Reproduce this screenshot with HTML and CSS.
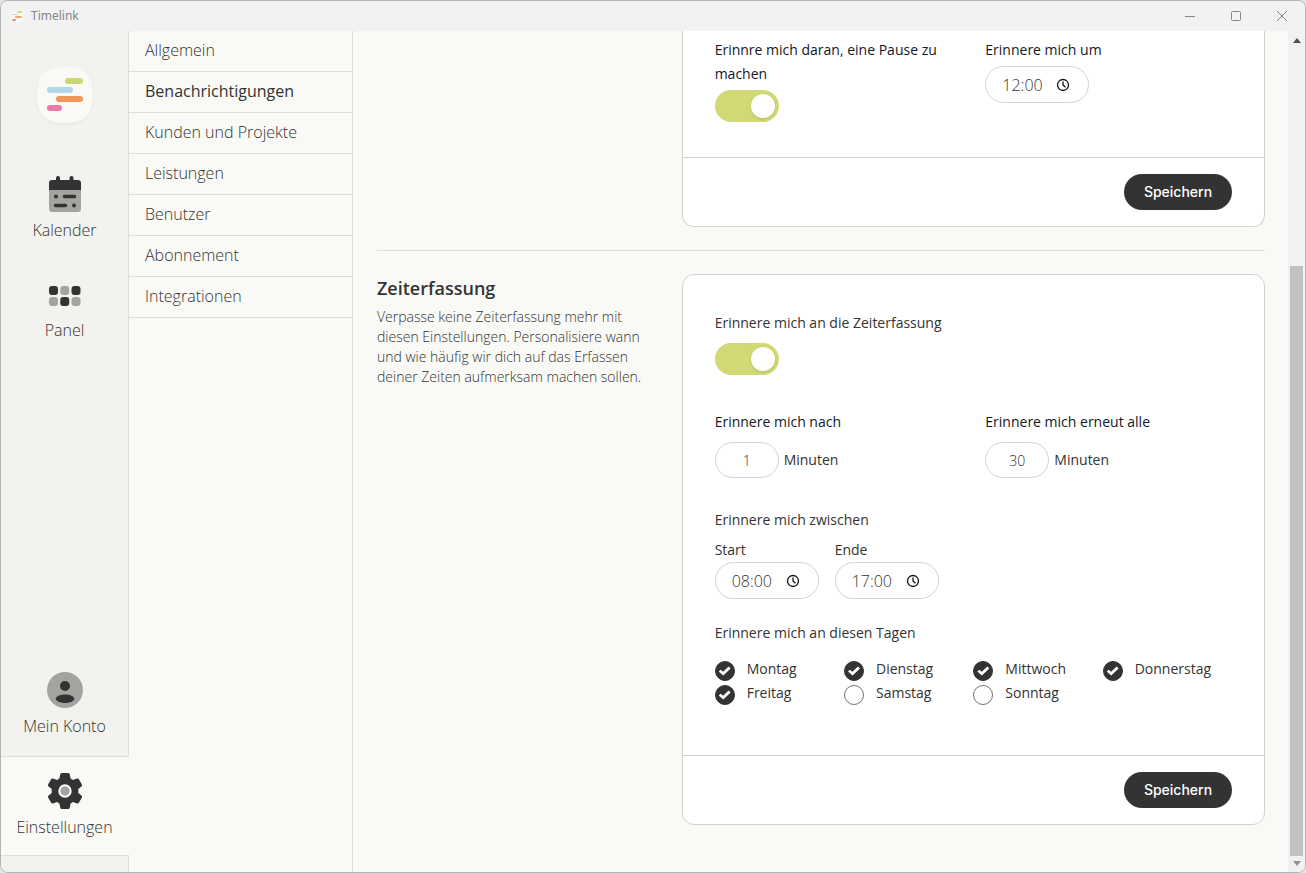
FILE: index.html
```html
<!DOCTYPE html>
<html lang="de">
<head>
<meta charset="utf-8">
<meta name="viewport" content="width=device-width, initial-scale=1">
<title>Timelink</title>
<link rel="stylesheet" href="styles.css">
</head>
<body>
<div class="window">
  <header class="titlebar">
    <svg class="titlebar-logo" viewBox="0 0 12 12" aria-hidden="true"><rect width="12" height="12" rx="4" fill="#faf7f1"/><rect x="6" y="1" width="5" height="2" rx="1" fill="#ccd673"/><rect x="1" y="4" width="6" height="1" fill="#c5d3d6"/><rect x="4" y="6" width="7" height="2" rx="1" fill="#f2a57a"/><rect x="1" y="9" width="4" height="2" rx="1" fill="#ef8f8c"/></svg>
    <span class="titlebar-name">Timelink</span>
    <div class="window-controls">
      <button class="window-button" aria-label="Minimieren"><svg viewBox="0 0 12 12"><path d="M1 6.500h10"/></svg></button>
      <button class="window-button" aria-label="Maximieren"><svg viewBox="0 0 12 12"><rect x="1.500" y="1.500" width="9" height="9" rx="1"/></svg></button>
      <button class="window-button" aria-label="Schließen"><svg viewBox="0 0 12 12"><path d="M1 1l10 10M11 1L1 11"/></svg></button>
    </div>
  </header>
  <div class="app">
    <nav class="sidebar" aria-label="Hauptnavigation">
      <svg class="logo" viewBox="0 0 56 56" aria-hidden="true"><path d="M28 0C48 0 56 8 56 28S48 56 28 56 0 48 0 28 8 0 28 0Z" fill="#faf9f6"/><rect x="28" y="11" width="18" height="6" rx="3" fill="#ccd673"/><rect x="10" y="20" width="26" height="6" rx="3" fill="#b0d6e7"/><rect x="19" y="29" width="27" height="6" rx="3" fill="#f2965c"/><rect x="10" y="38" width="15" height="6" rx="3" fill="#e879a8"/></svg>
      <a class="side-link" href="#kalender">
        <svg class="side-icon" viewBox="0 0 36 36" aria-hidden="true"><path d="M2 13h32v20a3 3 0 0 1-3 3H5a3 3 0 0 1-3-3Z" fill="#a3a49f"/><path d="M2 14V7a3 3 0 0 1 3-3h4V2a2 2 0 0 1 4 0v2h9.500V2a2 2 0 0 1 4 0v2H31a3 3 0 0 1 3 3v7Z" fill="#333"/><circle cx="9" cy="20.500" r="2" fill="#333"/><path d="M17.500 20.500h10M8.500 29.500h10" stroke="#333" stroke-width="3.500" stroke-linecap="round"/><circle cx="27" cy="29.500" r="2" fill="#333"/></svg>
        <span>Kalender</span>
      </a>
      <a class="side-link" href="#panel">
        <svg class="side-icon" viewBox="0 0 36 36" aria-hidden="true"><g fill="#333"><rect x="2" y="10" width="9" height="9" rx="3"/><rect x="24.500" y="10" width="9" height="9" rx="3"/><rect x="13.250" y="21" width="9" height="9" rx="3"/></g><g fill="#a3a49f"><rect x="13.250" y="10" width="9" height="9" rx="3"/><rect x="2" y="21" width="9" height="9" rx="3"/><rect x="24.500" y="21" width="9" height="9" rx="3"/></g></svg>
        <span>Panel</span>
      </a>
      <div class="side-spacer"></div>
      <a class="side-link" href="#konto">
        <svg class="side-icon" viewBox="0 0 36 36" aria-hidden="true"><circle cx="18" cy="18" r="18" fill="#a3a49f"/><circle cx="18" cy="14" r="5" fill="#333"/><path d="M8.500 26.500C11 21 25 21 27.500 26.500 26 32.500 10 32.500 8.500 26.500Z" fill="#333"/></svg>
        <span>Mein Konto</span>
      </a>
      <a class="side-link active" href="#einstellungen" aria-current="page">
        <svg class="side-icon" viewBox="0 0 36 36" aria-hidden="true"><path d="M15 0h6q1.500 0 1.800 1.500l.8 4 2.400 1.400 3.900-1.300q1.400-.5 2.100.8l2.800 4.800q.7 1.300-.4 2.200L31.300 16v3.900l3.100 2.700q1.100.9.400 2.200L32 29.600q-.7 1.300-2.100.8L26 29.100l-2.400 1.400-.8 4Q22.500 36 21 36h-6q-1.500 0-1.800-1.500l-.8-4L10 29.100l-3.900 1.300q-1.400.5-2.100-.8l-2.800-4.800q-.7-1.300.4-2.200L4.700 19.900V16l-3.100-2.600q-1.100-.9-.4-2.200L4 6.400q.7-1.300 2.100-.8L10 6.900l2.400-1.400.8-4Q13.500 0 15 0Z" fill="#333"/><circle cx="18" cy="18" r="5.700" fill="#a3a49f" stroke="#fff" stroke-width="2"/></svg>
        <span>Einstellungen</span>
      </a>
    </nav>
    <nav class="subnav" aria-label="Einstellungen">
      <a href="#allgemein">Allgemein</a>
      <a class="current" href="#benachrichtigungen" aria-current="page">Benachrichtigungen</a>
      <a href="#kunden">Kunden und Projekte</a>
      <a href="#leistungen">Leistungen</a>
      <a href="#benutzer">Benutzer</a>
      <a href="#abonnement">Abonnement</a>
      <a href="#integrationen">Integrationen</a>
    </nav>
    <main class="content">
      <section class="setting">
        <div class="intro"></div>
        <form class="card card-continued">
          <div class="card-body pause-body">
            <div class="columns">
              <div>
                <label class="strong" for="pause">Erinnre mich daran, eine Pause zu machen</label>
                <input class="toggle" id="pause" type="checkbox" role="switch" checked>
              </div>
              <div>
                <label class="strong" for="pause-time">Erinnere mich um</label>
                <div class="time pause-time"><input id="pause-time" type="text" value="12:00"><svg viewBox="0 0 14 14" aria-hidden="true"><circle cx="7" cy="7" r="5.500"/><path d="M7 3.500V7l2.500 2.200"/></svg></div>
              </div>
            </div>
          </div>
          <div class="card-footer"><button class="save" type="button">Speichern</button></div>
        </form>
      </section>
      <hr class="divider">
      <section class="setting">
        <div class="intro">
          <h2>Zeiterfassung</h2>
          <p>Verpasse keine Zeiterfassung mehr mit diesen Einstellungen. Personalisiere wann und wie häufig wir dich auf das Erfassen deiner Zeiten aufmerksam machen sollen.</p>
        </div>
        <form class="card">
          <div class="card-body">
            <label for="tracking">Erinnere mich an die Zeiterfassung</label>
            <input class="toggle spaced" id="tracking" type="checkbox" role="switch" checked>
            <div class="columns intervals">
              <div>
                <label class="strong" for="after">Erinnere mich nach</label>
                <div class="minutes"><input id="after" type="text" inputmode="numeric" value="1"><span>Minuten</span></div>
              </div>
              <div>
                <label class="strong" for="again">Erinnere mich erneut alle</label>
                <div class="minutes"><input id="again" type="text" inputmode="numeric" value="30"><span>Minuten</span></div>
              </div>
            </div>
            <fieldset class="between">
              <legend>Erinnere mich zwischen</legend>
              <div class="times">
                <div>
                  <label for="start">Start</label>
                  <div class="time"><input id="start" type="text" value="08:00"><svg viewBox="0 0 14 14" aria-hidden="true"><circle cx="7" cy="7" r="5.500"/><path d="M7 3.500V7l2.500 2.200"/></svg></div>
                </div>
                <div>
                  <label for="end">Ende</label>
                  <div class="time"><input id="end" type="text" value="17:00"><svg viewBox="0 0 14 14" aria-hidden="true"><circle cx="7" cy="7" r="5.500"/><path d="M7 3.500V7l2.500 2.200"/></svg></div>
                </div>
              </div>
            </fieldset>
            <fieldset class="weekdays">
              <legend>Erinnere mich an diesen Tagen</legend>
              <div class="days">
                <label class="day"><input type="checkbox" checked>Montag</label>
                <label class="day"><input type="checkbox" checked>Dienstag</label>
                <label class="day"><input type="checkbox" checked>Mittwoch</label>
                <label class="day"><input type="checkbox" checked>Donnerstag</label>
                <label class="day"><input type="checkbox" checked>Freitag</label>
                <label class="day"><input type="checkbox">Samstag</label>
                <label class="day"><input type="checkbox">Sonntag</label>
              </div>
            </fieldset>
          </div>
          <div class="card-footer"><button class="save" type="button">Speichern</button></div>
        </form>
      </section>
    </main>
    <div class="scrollbar" aria-hidden="true">
      <svg viewBox="0 0 8 5"><path d="M0 5l4-5 4 5Z" fill="#505050"/></svg>
      <div class="track"><div class="thumb"></div></div>
      <svg viewBox="0 0 8 5"><path d="M0 0h8L4 5Z" fill="#909090"/></svg>
    </div>
  </div>
</div>
</body>
</html>
```
FILE: styles.css
```css
* { box-sizing: border-box; }

body {
  margin: 0;
  background: #e4e4e4;
  color: #333;
  font: 300 16px/24px "Open Sans", "Noto Sans", sans-serif;
}

a { color: inherit; text-decoration: none; }

input, button { font: inherit; color: inherit; }

.window {
  display: flex;
  flex-direction: column;
  height: 100vh;
  overflow: hidden;
  border: 1px solid #b4b4b4;
  border-radius: 8px;
  background: #f9faf6;
}

.titlebar {
  display: flex;
  flex: none;
  align-items: center;
  height: 30px;
  padding-left: 10px;
  background: #f2f2f2;
}

.titlebar-logo { width: 12px; height: 12px; }

.titlebar-name {
  margin-left: 8px;
  color: #858585;
  font: 400 12px/16px "Noto Sans", "Open Sans", sans-serif;
}

.window-controls { display: flex; margin-left: auto; }

.window-button {
  display: grid;
  place-items: center;
  width: 46px;
  height: 30px;
  padding: 0;
  border: 0;
  background: none;
}

.window-button svg {
  width: 12px;
  height: 12px;
  fill: none;
  stroke: #858585;
}

.app { display: flex; flex: 1; min-height: 0; }

.sidebar {
  display: flex;
  flex: none;
  flex-direction: column;
  align-items: center;
  width: 128px;
  padding: 36px 0 16px;
  border-right: 1px solid #dedfdb;
  background: #f2f3ee;
}

.logo {
  flex: none;
  width: 56px;
  height: 56px;
  margin-bottom: 36px;
  filter: drop-shadow(0 1px 1px #00000012);
}

.side-link {
  display: flex;
  flex: none;
  flex-direction: column;
  align-items: center;
  gap: 6px;
  width: 100%;
  padding: 16px 0 18px;
}

.sidebar > .side-link:first-of-type { padding-top: 17px; }

.side-link.active {
  width: calc(100% + 1px);
  margin-right: -1px;
  padding: 16px 1px 16px 0;
  border: solid #dedfdb;
  border-width: 1px 0;
  background: #f9faf6;
}

.side-icon { width: 36px; height: 36px; }

.side-spacer { flex: 1; }

.subnav {
  flex: none;
  width: 224px;
  border-right: 1px solid #dedfdb;
}

.subnav a {
  display: block;
  padding: 7px 16px 9px;
  border-bottom: 1px solid #dedfdb;
}

.subnav .current { font-weight: 400; }

.content {
  flex: 1;
  min-width: 0;
  overflow: hidden;
  padding: 0 23px 0 24px;
}

.setting {
  display: grid;
  grid-template-columns: repeat(3, minmax(0, 1fr));
  gap: 26px;
}

.intro h2 {
  margin: 1px 0 6px;
  font-size: 18px;
  font-weight: 600;
  line-height: 26px;
}

.intro p {
  margin: 0;
  font-size: 14px;
  line-height: 20px;
}

.divider {
  height: 1px;
  margin: 23px 0;
  border: 0;
  background: #dedfdb;
}

.card {
  grid-column: span 2;
  border: 1px solid #d2d2d2;
  border-radius: 12px;
  background: #fff;
  font-size: 14px;
  font-weight: 400;
}

.card-continued { border-top: 0; border-radius: 0 0 12px 12px; }

.card-body { padding: 36px 32px 50px; }

.pause-body { padding: 7px 32px 35px; }

.columns {
  display: grid;
  grid-template-columns: 1fr 1fr;
  gap: 24px;
}

label, legend { display: block; padding: 0; }

.strong { color: #111827; }

.toggle {
  display: block;
  appearance: none;
  width: 64px;
  height: 32px;
  margin: 4px 0 0;
  padding: 4px;
  border-radius: 16px;
  background: #d1d874;
}

.toggle::before {
  content: "";
  display: block;
  width: 24px;
  height: 24px;
  margin-left: auto;
  border-radius: 50%;
  background: #fff;
  box-shadow: 0 1px 3px #00000020;
}

.toggle.spaced { margin-top: 8px; }

.intervals { margin-top: 35px; }

.minutes {
  display: flex;
  align-items: center;
  gap: 5px;
  margin-top: 8px;
}

.minutes input {
  width: 64px;
  height: 36px;
  border: 1px solid #d2d2d2;
  border-radius: 18px;
  background: #fff;
  font-weight: 300;
  text-align: center;
}

fieldset { margin: 0; padding: 0; border: 0; }

.between { margin-top: 30px; }

.times { display: flex; gap: 16px; margin-top: 6px; }

.time {
  display: flex;
  align-items: center;
  justify-content: space-between;
  width: 104px;
  height: 37px;
  padding: 0 18px 0 16px;
  border: 1px solid #d2d2d2;
  border-radius: 19px;
}

.pause-time { margin-top: 4px; }

.time input {
  width: 48px;
  padding: 0;
  border: 0;
  background: none;
  font-size: 16px;
  font-weight: 300;
}

.time svg {
  width: 14px;
  height: 14px;
  fill: none;
  stroke: #111;
  stroke-width: 1.3;
}

.weekdays { margin-top: 22px; }

.days {
  display: grid;
  grid-template-columns: repeat(4, 1fr);
  margin-top: 12px;
}

.day { display: flex; gap: 12px; }

.day input {
  flex: none;
  appearance: none;
  width: 20px;
  height: 20px;
  margin: 4px 0 0;
  border: 1px solid #6b7280;
  border-radius: 50%;
  background: #fff;
}

.day input:checked {
  display: grid;
  place-items: center;
  border-color: #333;
  background: #333;
}

.day input:checked::before {
  content: "";
  width: 12px;
  height: 10px;
  background: #fff;
  clip-path: polygon(0 55%, 17% 37%, 37% 58%, 83% 5%, 100% 24%, 38% 96%);
}

.card-footer {
  display: flex;
  justify-content: flex-end;
  padding: 16px 32px;
  border-top: 1px solid #d2d2d2;
}

.save {
  min-width: 108px;
  height: 36px;
  padding: 0 16px;
  border: 0;
  border-radius: 18px;
  background: #333;
  color: #fff;
  font-family: Inter, "Open Sans", sans-serif;
  font-weight: 500;
}

.scrollbar {
  display: flex;
  flex: none;
  flex-direction: column;
  align-items: center;
  width: 17px;
  padding: 7px 0 6px;
  background: #f1f1f1;
}

.scrollbar svg { width: 8px; height: 5px; }

.track {
  display: flex;
  flex: 1;
  flex-direction: column;
  justify-content: flex-end;
  width: 13px;
  padding: 5px 0;
}

.thumb { height: 73%; background: #c1c1c1; }
```
